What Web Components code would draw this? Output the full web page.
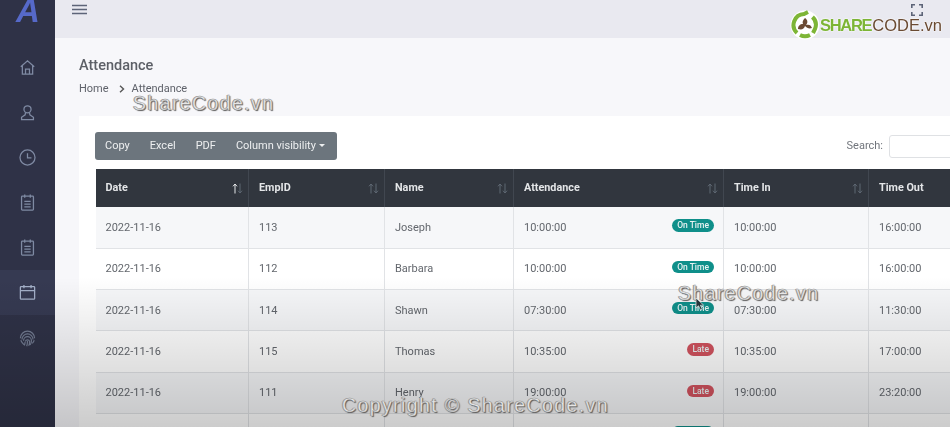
<!DOCTYPE html>
<html lang="en">
<head>
<meta charset="utf-8">
<title>Attendance</title>
<style>
    html, body { margin: 0; height: 427px; overflow: hidden; background: #f7f7fa; }
    body { font-family: Roboto, "Liberation Sans", sans-serif; position: relative; }
    app-shell { display: grid; filter: blur(.35px); }
</style>
</head>
<body>
<app-shell>
    <side-bar slot="side"></side-bar>
    <top-bar slot="top"></top-bar>
    <page-head slot="main" title-text="Attendance"></page-head>
    <attendance-card slot="main"></attendance-card>
</app-shell>
<video-overlay></video-overlay>
<script>
const ICONS = {
    home: `<path d="M3.500 11 12 3.500 20.500 11M5.500 9.500V20.500H18.500V9.500M9.500 20.500V14H14.500V20.500"/>`,
    user: `<circle cx="12" cy="8" r="4.500"/><path d="M9.500 12 9 15 4.500 18V21H19.500V18L15 15 14.500 12"/>`,
    clock: `<circle cx="12" cy="12" r="9.500"/><path d="M12 6.500V12.500H17"/>`,
    note: `<rect x="4.500" y="4" width="15" height="17.500" rx="1"/><path d="M8.500 2V6M15.500 2V6M8 10.500H16M8 14H16M8 17.500H16"/>`,
    calendar: `<rect x="3" y="4.500" width="18" height="16" rx="1"/><path d="M3 9.500H21M7.500 2.500V6.500M16.500 2.500V6.500"/>`,
    finger: `<path d="M3 13a9 9 0 0 1 18 0M5 14.500a7 7 0 0 1 14 0M7 16a5 5 0 0 1 10 0c0 2-.8 4-1.800 5.500M9.300 17a2.800 2.800 0 0 1 5.400 0c0 2-.5 4-1.200 5.500M12 16.500c0 2.500-.3 4.500-1 6.500M3.500 15.500c1 2.500 2.500 4 4 5.500M20.500 15.500c-.6 1.600-1.300 2.800-2.500 4M9 17.500c0 1.500-.4 3-1 4.500"/>`
};

class SideItem extends HTMLElement {
    connectedCallback() {
        const icon = this.getAttribute("icon");
        this.attachShadow({ mode: "open" }).innerHTML = `
            <style>
                :host { display: flex; align-items: center; justify-content: center; height: 45px; }
                :host([active]) { background: #363a52; }
                svg { width: 19px; height: 19px; fill: none; stroke: #7f8aa3; stroke-width: 1.600; }
                :host([active]) svg { stroke: #a3afc8; }
                :host([icon="finger"]) svg { stroke: #737c92; stroke-width: 1.500; }
            </style>
            <svg viewBox="0 0 24 24">${ICONS[icon]}</svg>`;
    }
}
customElements.define("side-item", SideItem);

class SideBar extends HTMLElement {
    constructor() {
        super();
        this.attachShadow({ mode: "open" }).innerHTML = `
            <style>
                :host { display: block; background: #2f3247; height: 427px; }
                .logo { height: 45px; overflow: hidden; text-align: center; }
                .logo span {
                    display: block; margin-top: -9px; padding-left: 1px;
                    font: italic 700 33px/40px "Liberation Sans", sans-serif; color: #5669c9;
                }
            </style>
            <div class="logo"><span>A</span></div>
            <side-item icon="home"></side-item>
            <side-item icon="user"></side-item>
            <side-item icon="clock"></side-item>
            <side-item icon="note"></side-item>
            <side-item icon="note"></side-item>
            <side-item icon="calendar" active></side-item>
            <side-item icon="finger"></side-item>`;
    }
}
customElements.define("side-bar", SideBar);

class TopBar extends HTMLElement {
    constructor() {
        super();
        this.attachShadow({ mode: "open" }).innerHTML = `
            <style>
                :host {
                    display: flex; justify-content: space-between; align-items: flex-start;
                    height: 38px; background: #e9e9f0; position: relative;
                }
                .menu { width: 15px; height: 11px; margin: 4px 0 0 17px; }
                .full { width: 12px; height: 12px; margin: 4px 27px 0 0; position: relative; }
                svg { display: block; fill: none; stroke: #5d6478; }
                .logo {
                    position: absolute; left: 735px; top: 10px;
                    display: flex; align-items: center; gap: 0; white-space: nowrap;
                    font: 400 16.500px/30px "Liberation Sans", sans-serif; color: #6a4a32;
                    text-shadow: 0 0 2px #fff, 0 0 2px #fff;
                }
                .logo b { color: #7db536; letter-spacing: -1.300px; margin-right: 1px; }
                .logo svg { width: 30px; height: 30px; }
            </style>
            <svg class="menu" viewBox="0 0 15 11" stroke-width="1.700">
                <path d="M0 1.500H15M0 5.500H15M0 9.500H15"/>
            </svg>
            <div class="logo">
                <svg viewBox="0 0 30 30">
                    <circle cx="15" cy="15" r="14.500" fill="#fff" stroke="none"/>
                    <path d="M7 23A11 11 0 0 1 14 4L18 2M22.500 7A11 11 0 0 1 25 19L23 23M20 25A11 11 0 0 1 10 25" stroke="#7db536" stroke-width="4"/>
                    <path d="M15 8c3 2 3 5 1 7 3-1 5 0 6 3-3 1-5 0-7-2-1 3-3 4-7 3 0-3 2-5 5-5-1-2 0-4 2-6z" fill="#6a4a32" stroke="none"/>
                </svg>
                <b>SHARE</b><span>CODE.vn</span>
            </div>
            <svg class="full" viewBox="0 0 12 12" stroke-width="1.600">
                <path d="M0.800 4V0.800H4M8 0.800H11.200V4M11.200 8V11.200H8M4 11.200H0.800V8"/>
            </svg>`;
    }
}
customElements.define("top-bar", TopBar);

class PageHead extends HTMLElement {
    connectedCallback() {
        const t = this.getAttribute("title-text");
        this.attachShadow({ mode: "open" }).innerHTML = `
            <style>
                :host { display: block; height: 78px; padding-left: 24px; box-sizing: border-box; color: #5f626a; }
                h1 { margin: 0; padding-top: 19px; font: 500 14.500px/17px Roboto, sans-serif; color: #5c5f66; }
                nav { display: flex; align-items: center; margin-top: 8px; font: 400 11px/14px Roboto, sans-serif; }
                nav span:last-child { letter-spacing: -.05px; }
                svg { width: 6px; height: 8px; margin: 0 7px 0 10px; fill: none; stroke: #555; stroke-width: 1.400; }
            </style>
            <h1>${t}</h1>
            <nav><span>Home</span>
                <svg viewBox="0 0 6 8"><path d="M1 .8 4.500 4 1 7.200"/></svg>
                <span>${t}</span></nav>`;
    }
}
customElements.define("page-head", PageHead);

class ExportButtons extends HTMLElement {
    constructor() {
        super();
        this.attachShadow({ mode: "open" }).innerHTML = `
            <style>
                :host {
                    display: flex; align-items: center; height: 28px; padding: 0 10px;
                    gap: 20px; background: #6c757d; border-radius: 3px;
                    color: #edeff0; font: 400 11px/28px Roboto, sans-serif;
                }
                i {
                    display: inline-block; margin-left: 3px; vertical-align: 2px;
                    border: 3.500px solid transparent; border-top-color: #edeff0; border-bottom: 0;
                }
            </style>
            <span>Copy</span><span>Excel</span><span>PDF</span>
            <span>Column visibility<i></i></span>`;
    }
}
customElements.define("export-buttons", ExportButtons);

class SearchBox extends HTMLElement {
    constructor() {
        super();
        this.attachShadow({ mode: "open" }).innerHTML = `
            <style>
                :host { display: flex; align-items: center; gap: 6px; color: #71757c; font: 400 11px/14px Roboto, sans-serif; }
                div { width: 110px; height: 23px; box-sizing: border-box; border: 1px solid #dfe1e4; border-radius: 3px; background: #fff; }
            </style>
            <span>Search:</span><div></div>`;
    }
}
customElements.define("search-box", SearchBox);

class StatusBadge extends HTMLElement {
    connectedCallback() {
        const late = this.textContent.trim() === "Late";
        this.attachShadow({ mode: "open" }).innerHTML = `
            <style>
                :host {
                    display: block; height: 12.500px; padding: 0 5px; border-radius: 7px;
                    margin-bottom: 5px; background: ${late ? "#d2535f" : "#0f8f8a"};
                    color: #e9f3f3; font: 500 8.500px/12px Roboto, sans-serif;
                }
            </style><slot></slot>`;
    }
}
customElements.define("status-badge", StatusBadge);

const COLUMNS = [["Date", 152.5], ["EmpID", 136], ["Name", 129], ["Attendance", 210], ["Time In", 145], ["Time Out", 130]];
const RECORDS = [
    ["2022-11-16", "113", "Joseph", "10:00:00", "On Time", "10:00:00", "16:00:00"],
    ["2022-11-16", "112", "Barbara", "10:00:00", "On Time", "10:00:00", "16:00:00"],
    ["2022-11-16", "114", "Shawn", "07:30:00", "On Time", "07:30:00", "11:30:00"],
    ["2022-11-16", "115", "Thomas", "10:35:00", "Late", "10:35:00", "17:00:00"],
    ["2022-11-16", "111", "Henry", "19:00:00", "Late", "19:00:00", "23:20:00"],
    ["2022-11-16", "116", "Mary", "10:00:00", "On Time", "10:00:00", "16:00:00"]
];

class AttendanceTable extends HTMLElement {
    sortIcon(active) {
        return `<svg viewBox="0 0 11 11">
            <path d="M3 10.500V1M1 3.300 3 1 5 3.300" stroke="${active ? "#e6e8ea" : "#5f6873"}"/>
            <path d="M8 .5V10M6 7.700 8 10 10 7.700" stroke="#5f6873"/></svg>`;
    }
    connectedCallback() {
        const head = COLUMNS.map(([name], i) =>
            `<th><div class="cell"><span>${name}</span>${this.sortIcon(i === 0)}</div></th>`).join("");
        const rows = RECORDS.map((r) => `<tr>
            <td>${r[0]}</td><td>${r[1]}</td><td>${r[2]}</td>
            <td><div class="cell"><span>${r[3]}</span><status-badge>${r[4]}</status-badge></div></td>
            <td>${r[5]}</td><td>${r[6]}</td></tr>`).join("");
        this.attachShadow({ mode: "open" }).innerHTML = `
            <style>
                :host { display: block; }
                table { border-collapse: collapse; table-layout: fixed; width: 902.500px; font: 400 11px/14px Roboto, sans-serif; color: #63676d; }
                th {
                    height: 38px; padding: 0 5px 0 10px; box-sizing: border-box; text-align: left;
                    background: #31363e; color: #e4e6e8; font-weight: 700; font-size: 10.800px;
                    border-left: 1px solid #414750;
                }
                th:first-child, td:first-child { border-left: 0; }
                td {
                    height: 41.300px; padding: 1px 9px 0 10px; box-sizing: border-box;
                    border-left: 1px solid #e1e3e6; border-bottom: 1px solid #e1e3e6;
                }
                th:first-child, td:first-child { padding-left: 9.500px; }
                tr:nth-child(odd) td { background: #f6f7f9; }
                tr:nth-child(even) td { background: #fff; }
                .cell { display: flex; justify-content: space-between; align-items: center; }
                svg { width: 11px; height: 11px; fill: none; stroke-width: 1; }
            </style>
            <table>
                <colgroup>${COLUMNS.map((c) => `<col style="width:${c[1]}px">`).join("")}</colgroup>
                <thead><tr>${head}</tr></thead>
                <tbody>${rows}</tbody>
            </table>`;
    }
}
customElements.define("attendance-table", AttendanceTable);

class AttendanceCard extends HTMLElement {
    constructor() {
        super();
        this.attachShadow({ mode: "open" }).innerHTML = `
            <style>
                :host {
                    display: block; width: 960px; margin-left: 24px; padding: 16px 0 0 16px;
                    box-sizing: border-box; background: #fff; height: 311px;
                }
                .bar { display: flex; justify-content: space-between; align-items: center; width: 904px; margin-bottom: 9px; }
                export-buttons { width: 242px; box-sizing: border-box; }
                attendance-table { margin-left: 1px; }
            </style>
            <div class="bar"><export-buttons></export-buttons><search-box></search-box></div>
            <attendance-table></attendance-table>`;
    }
}
customElements.define("attendance-card", AttendanceCard);

class WaterMark extends HTMLElement {
    constructor() {
        super();
        this.attachShadow({ mode: "open" }).innerHTML = `
            <style>
                :host {
                    position: absolute; white-space: nowrap;
                    font: 400 19.500px/22px "Liberation Sans", sans-serif; letter-spacing: 1.400px;
                    color: #e6e6e6; -webkit-text-stroke: .3px #8d8d8d;
                    text-shadow: 1px 1px 1px #555, -1px 0 0 #999;
                }
            </style><slot></slot>`;
    }
}
customElements.define("water-mark", WaterMark);

// dim band of the video player plus the marks burnt into the frame
class VideoOverlay extends HTMLElement {
    constructor() {
        super();
        this.attachShadow({ mode: "open" }).innerHTML = `
            <style>
                :host { position: absolute; inset: 0; pointer-events: none; display: block; }
                .dim {
                    position: absolute; left: 0; right: 0; bottom: 0; height: 150px;
                    background: linear-gradient(rgba(0,0,0,0), rgba(0,0,0,.2));
                }
                .cursor { position: absolute; left: 695px; top: 297px; width: 10px; height: 14px; }
            </style>
            <div class="dim"></div>
            <water-mark style="left:133px;top:92px">ShareCode.vn</water-mark>
            <water-mark style="left:678px;top:282px">ShareCode.vn</water-mark>
            <water-mark style="left:342px;top:394px">Copyright © ShareCode.vn</water-mark>
            <svg class="cursor" viewBox="0 0 10 14"><path d="M1 1V11L3.500 8.800 5.500 13 7.300 12.200 5.400 8.200H8.700Z" fill="#26343a" stroke="#e8eeee" stroke-width=".7"/></svg>`;
    }
}
customElements.define("video-overlay", VideoOverlay);

class AppShell extends HTMLElement {
    constructor() {
        super();
        this.attachShadow({ mode: "open" }).innerHTML = `
            <style>
                :host { display: grid; grid-template-columns: 55px 1fr; width: 950px; height: 427px; overflow: hidden; background: #f7f7fa; }
                main { min-width: 0; }
            </style>
            <slot name="side"></slot>
            <main><slot name="top"></slot><slot name="main"></slot></main>`;
    }
}
customElements.define("app-shell", AppShell);
</script>
</body>
</html>
